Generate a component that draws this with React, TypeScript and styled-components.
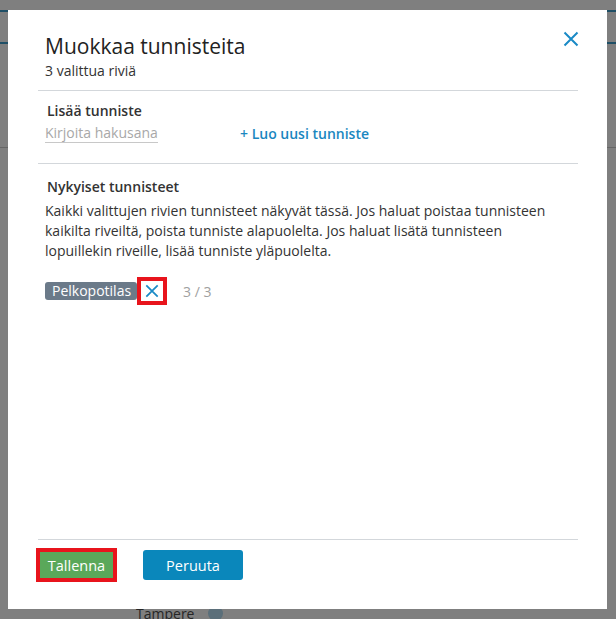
import React from 'react'
import styled, { createGlobalStyle } from 'styled-components'

const GlobalStyle = createGlobalStyle`
  html, body {
    margin: 0;
    padding: 0;
    background: #7f7f7f;
    font-family: 'Open Sans', 'Noto Sans', sans-serif;
    overflow: hidden;
  }
`

// dimmed page behind the dialog
const Backdrop = styled.div`
  position: fixed;
  inset: 0;
  background: #7f7f7f;
`

const TopBar = styled.div`
  margin-top: 10px;
  height: 30px;
  border-top: 2px solid #1f4f66;
  border-bottom: 2px solid #1f4f66;
`

const Rule = styled.div`
  margin-top: 103px;
  height: 1px;
  background: #666;
`

const CityRow = styled.div`
  position: absolute;
  left: 136px;
  top: 604px;
  display: flex;
  align-items: center;
  gap: 14px;
  font-size: 14px;
  color: #262626;
`

const Dot = styled.span`
  width: 15px;
  height: 15px;
  border-radius: 50%;
  background: #5b6f7a;
`

const Overlay = styled.div`
  position: fixed;
  inset: 0;
  padding: 10px 9px 10px 8px;
  box-sizing: border-box;
`

const Dialog = styled.div`
  width: 599px;
  height: 599px;
  background: #fff;
  box-sizing: border-box;
  padding: 0 29px 0 30px;
  display: flex;
  flex-direction: column;
`

const Header = styled.header`
  padding: 21px 7px 9px;
  display: flex;
  justify-content: space-between;
  align-items: flex-start;
  border-bottom: 1px solid #d3d7db;
`

const Title = styled.h1`
  margin: 0;
  font-size: 21px;
  font-weight: 400;
  line-height: 30px;
  color: #222;
`

const Subtitle = styled.div`
  font-size: 14px;
  line-height: 20px;
  color: #333;
`

const CloseButton = styled.button`
  border: none;
  background: none;
  padding: 0;
  margin: 0 -8px 0 0;
  width: 16px;
  height: 16px;
  cursor: pointer;
  display: flex;
`

const Section = styled.section<{ $grow?: boolean }>`
  padding: 13px 7px 0;
  ${p => p.$grow ? 'flex: 1;' : ''}
`

const AddSection = styled(Section)`
  padding-top: 10px;
  padding-bottom: 20px;
  border-bottom: 1px solid #d3d7db;
`

const Label = styled.div`
  font-size: 14px;
  font-weight: 600;
  line-height: 20px;
  color: #333;
  padding-left: 2px;
`

const AddRow = styled.div`
  display: flex;
  align-items: center;
  gap: 82px;
  margin-top: 2px;
`

const SearchInput = styled.input`
  width: 113px;
  border: none;
  border-bottom: 1px solid #c8c8c8;
  padding: 0;
  font-family: inherit;
  font-size: 14px;
  line-height: 19px;
  color: #333;
  outline: none;
  &::placeholder {
    color: #a8a8a8;
  }
`

const CreateLink = styled.a`
  font-size: 14px;
  font-weight: 600;
  color: #1a87c0;
  text-decoration: none;
  cursor: pointer;
`

const Description = styled.p`
  margin: 4px 0 0;
  font-size: 14px;
  line-height: 20px;
  color: #333;
`

const TagRow = styled.div`
  display: flex;
  align-items: center;
  margin-top: 16px;
`

const Tag = styled.span`
  background: #6b7a89;
  color: #fff;
  font-size: 14px;
  font-weight: 500;
  line-height: 18px;
  padding: 0 6px 0 7px;
  border-radius: 3px;
`

const RemoveButton = styled.button`
  width: 30px;
  height: 28px;
  box-sizing: border-box;
  border: 4px solid #e8141c;
  background: #fff;
  padding: 0;
  display: flex;
  align-items: center;
  justify-content: center;
  cursor: pointer;
`

const Count = styled.span`
  margin-left: 16px;
  font-size: 14px;
  color: #a0a0a0;
`

const Footer = styled.footer`
  border-top: 1px solid #d3d7db;
  padding: 10px 0 29px;
  display: flex;
  align-items: center;
`

const Button = styled.button<{ $variant: 'save' | 'cancel' }>`
  height: 30px;
  border: none;
  border-radius: 3px;
  font-family: inherit;
  font-size: 14.5px;
  color: #fff;
  cursor: pointer;
  background: ${p => (p.$variant === 'save' ? '#5aa85a' : '#0a87bb')};
  width: ${p => (p.$variant === 'save' ? '77px' : '100px')};
  ${p =>
    p.$variant === 'save' &&
    `
    border-radius: 0;
    outline: 4px solid #e8141c;
    outline-offset: -2px;
    margin-right: 28px;
  `}
`

function Cross ({ size, stroke }: { size: number, stroke: number }) {
  return (
    <svg width={size} height={size} viewBox='0 0 16 16'>
      <path d='M1.5 1.5 L14.5 14.5 M14.5 1.5 L1.5 14.5' stroke='#1a8ac6' strokeWidth={stroke} fill='none' />
    </svg>
  )
}

function App () {
  return (
    <>
      <GlobalStyle />
      <Backdrop>
        <TopBar />
        <Rule />
        <CityRow>
          Tampere <Dot />
        </CityRow>
      </Backdrop>
      <Overlay>
        <Dialog>
          <Header>
            <div>
              <Title>Muokkaa tunnisteita</Title>
              <Subtitle>3 valittua riviä</Subtitle>
            </div>
            <CloseButton aria-label='Sulje'>
              <Cross size={16} stroke={2} />
            </CloseButton>
          </Header>
          <AddSection>
            <Label>Lisää tunniste</Label>
            <AddRow>
              <SearchInput placeholder='Kirjoita hakusana' />
              <CreateLink>+ Luo uusi tunniste</CreateLink>
            </AddRow>
          </AddSection>
          <Section $grow>
            <Label>Nykyiset tunnisteet</Label>
            <Description>
              Kaikki valittujen rivien tunnisteet näkyvät tässä. Jos haluat poistaa tunnisteen<br />
              kaikilta riveiltä, poista tunniste alapuolelta. Jos haluat lisätä tunnisteen<br />
              lopuillekin riveille, lisää tunniste yläpuolelta.
            </Description>
            <TagRow>
              <Tag>Pelkopotilas</Tag>
              <RemoveButton aria-label='Poista'>
                <Cross size={14} stroke={2} />
              </RemoveButton>
              <Count>3 / 3</Count>
            </TagRow>
          </Section>
          <Footer>
            <Button $variant='save'>Tallenna</Button>
            <Button $variant='cancel'>Peruuta</Button>
          </Footer>
        </Dialog>
      </Overlay>
    </>
  )
}

export default App
